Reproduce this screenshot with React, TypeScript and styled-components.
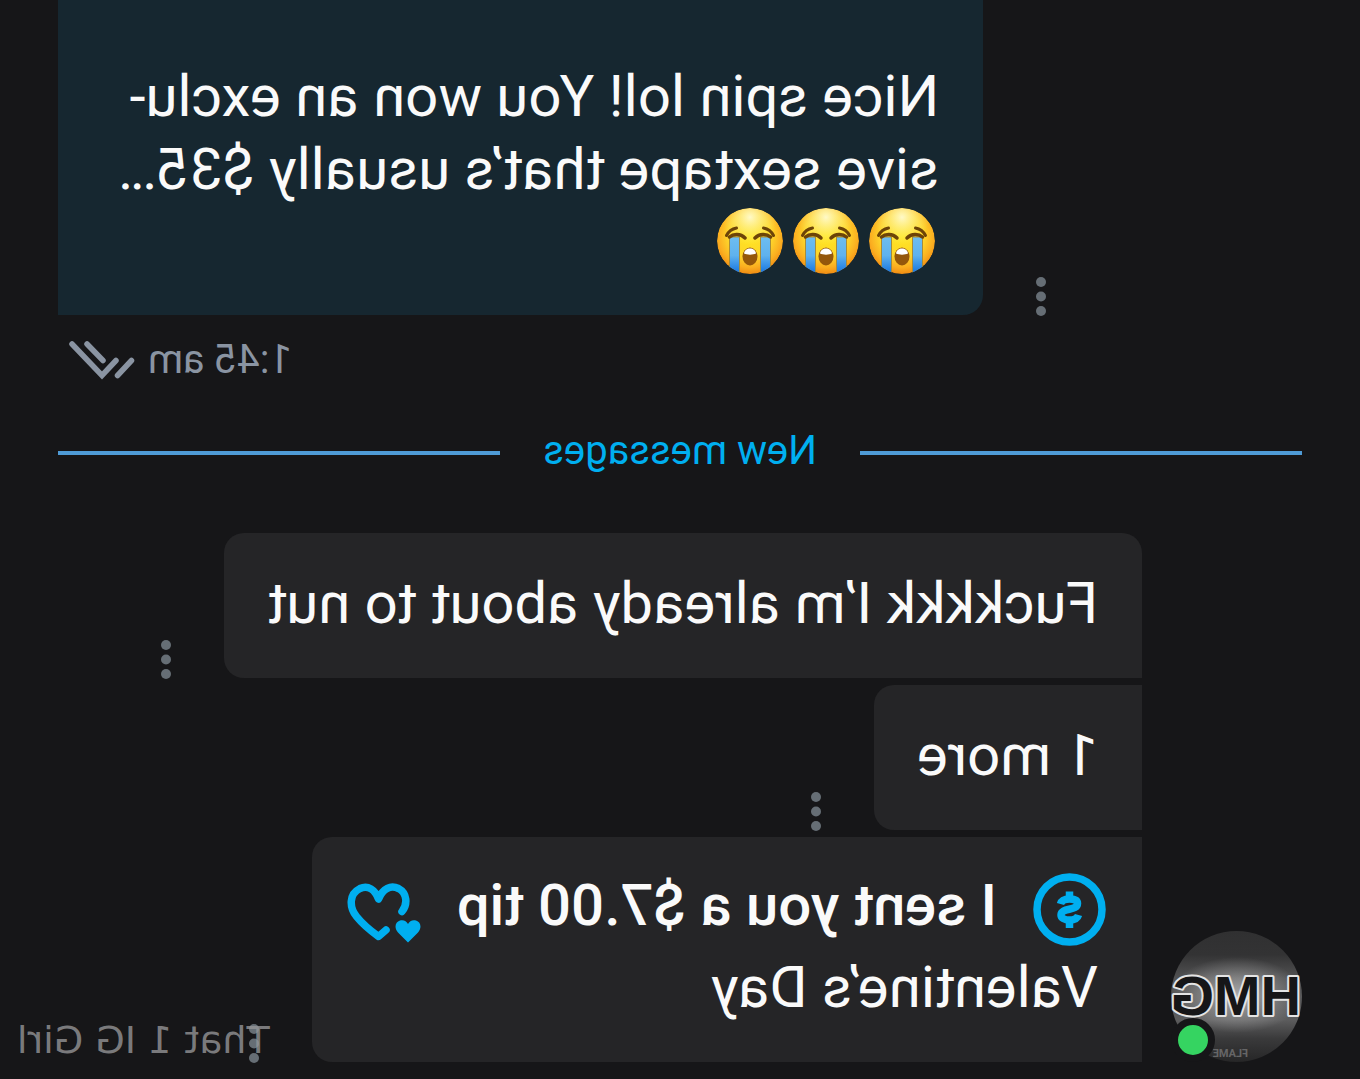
import React from "react";
import styled, { createGlobalStyle, css } from "styled-components";

const GlobalStyle = createGlobalStyle`
  body {
    margin: 0;
    background: #161618;
  }
  * {
    box-sizing: border-box;
  }
`;

const Page = styled.main`
  position: relative;
  min-height: 100vh;
  padding: 0 58px 17px;
  overflow: hidden;
  background: #161618;
  color: #fafafa;
  font-family: Roboto, "Noto Sans", sans-serif;
  font-size: 58px;
  line-height: 73px;
  transform: scaleX(-1);
`;

const Row = styled.div<{ $outgoing?: boolean }>`
  display: flex;
  align-items: flex-end;
  justify-content: ${(p) => (p.$outgoing ? "flex-end" : "flex-start")};
`;

const outgoingBubble = css`
  width: 925px;
  padding: 60px 44px 36px;
  background: #162730;
  border-radius: 0 0 0 20px;
`;

const incomingBubble = css`
  padding: 34px 43px 38px 44px;
  background: #252527;
`;

const Bubble = styled.div<{ $outgoing?: boolean; $first?: boolean }>`
  max-width: 100%;
  ${(p) => (p.$outgoing ? outgoingBubble : incomingBubble)}
  ${(p) =>
    !p.$outgoing && `border-radius: ${p.$first ? "20px" : "0"} 20px 20px 0;`}
  ${(p) => !p.$outgoing && !p.$first && "border-top-right-radius: 20px;"}
`;

const Text = styled.p`
  margin: 0;
`;

const EmojiLine = styled.div`
  display: flex;
  align-items: center;
  gap: 10px;
  height: 73px;
  padding: 0 4px 4px;
`;

const MenuButton = styled.button`
  display: flex;
  flex: none;
  justify-content: center;
  width: 116px;
  height: 39px;
  margin-bottom: -1px;
  padding: 0;
  border: 0;
  background: none;
  color: #666e75;
`;

const Meta = styled.div`
  display: flex;
  justify-content: flex-end;
  align-items: center;
  gap: 13px;
  padding: 21px 11px 0 0;
  color: #8a94a2;
  font-size: 40px;
  line-height: 48px;
`;

const Divider = styled.div`
  display: flex;
  align-items: center;
  gap: 43px;
  margin: 41px 0 57px;
  color: #00aff0;
  font-size: 40px;
  line-height: 51px;

  &::before,
  &::after {
    content: "";
    flex: 1;
    height: 4px;
    margin-top: 4px;
    background: #4f9bd6;
  }
`;

const Group = styled.section`
  display: flex;
  align-items: flex-end;
  gap: 29px;
`;

const Stack = styled.div`
  display: flex;
  flex: 1;
  flex-direction: column;
  gap: 7px;
`;

const Avatar = styled.div`
  position: relative;
  flex: none;
  width: 131px;
  height: 131px;
`;

const Online = styled.span`
  position: absolute;
  right: 0;
  bottom: 0;
  width: 44px;
  height: 44px;
  border: 7px solid #161618;
  border-radius: 50%;
  background: #35d461;
`;

const TipLine = styled.div`
  display: flex;
  align-items: flex-start;
  padding: 2px 0 5px;
  margin: 0 -8px;
  font-weight: 500;
  line-height: 64px;

  svg:last-child {
    margin-top: 10px;
  }
`;

const TipText = styled.span`
  margin: 0 36px;
`;

const Watermark = styled.span`
  position: absolute;
  right: 17px;
  bottom: 16px;
  color: rgba(150, 150, 152, 0.8);
  font-family: "DejaVu Sans", sans-serif;
  font-size: 38px;
  line-height: 46px;
`;

const Dots = () => (
  <svg width="10" height="39" viewBox="0 0 10 39" fill="currentColor" aria-hidden="true">
    <circle cx="5" cy="5" r="5" />
    <circle cx="5" cy="19.500" r="5" />
    <circle cx="5" cy="34" r="5" />
  </svg>
);

const Menu = () => (
  <MenuButton type="button" aria-label="Message options">
    <Dots />
  </MenuButton>
);

const Crying = () => (
  <svg width="66" height="66" viewBox="0 0 66 66" role="img" aria-label="Loudly crying face">
    <defs>
      <radialGradient id="face" cx="50%" cy="42%" r="60%">
        <stop offset="0" stopColor="#ffe61f" />
        <stop offset="0.55" stopColor="#fed52b" />
        <stop offset="0.8" stopColor="#fbae20" />
        <stop offset="1" stopColor="#ee8510" />
      </radialGradient>
      <radialGradient id="shine" cx="50%" cy="14%" r="42%">
        <stop offset="0" stopColor="#fffbd0" stopOpacity="0.95" />
        <stop offset="1" stopColor="#fff27a" stopOpacity="0" />
      </radialGradient>
      <linearGradient id="tear" x1="0" y1="0" x2="0" y2="1">
        <stop offset="0" stopColor="#6dbdf0" />
        <stop offset="0.5" stopColor="#5fb2ee" />
        <stop offset="1" stopColor="#1272e0" />
      </linearGradient>
      <clipPath id="round">
        <circle cx="33" cy="33" r="33" />
      </clipPath>
    </defs>
    <g clipPath="url(#round)">
      <circle cx="33" cy="33" r="33" fill="url(#face)" />
      <circle cx="33" cy="33" r="33" fill="url(#shine)" />
      <path d="M12.500 29h10v37h-10zM43.500 29h10v37h-10z" fill="url(#tear)" stroke="#a58c3c" strokeWidth="1" />
    </g>
    <g fill="none" stroke="#6d4408" strokeLinecap="round">
      <path d="M12.500 29c4-3.500 11-3.500 15.500 1M38 30c4.500-4.500 11.500-4.500 15.500-1" strokeWidth="3.500" />
      <path d="M9.500 27.500c2-4 5-6.500 10-7.500M56.500 27.500c-2-4-5-6.500-10-7.500" strokeWidth="3" />
    </g>
    <ellipse cx="33" cy="48.500" rx="7.500" ry="9" fill="#94570b" />
    <path d="M27 45.500c.5-3.500 3-5 6-5s5.500 1.500 6 5c-3 1.500-9 1.500-12 0z" fill="#fff" />
  </svg>
);

const DoubleCheck = () => (
  <svg
    width="66"
    height="40"
    viewBox="0 0 66 40"
    fill="none"
    stroke="currentColor"
    strokeWidth="5.500"
    strokeLinecap="round"
    role="img"
    aria-label="Read"
  >
    <path d="M3.500 20.500L17.500 35.500M19 20.500L33 35.500L63 4M32 20.500L48 4" />
  </svg>
);

const Dollar = () => (
  <svg width="73" height="73" viewBox="0 0 73 73" fill="none" stroke="#00aff0" role="img" aria-label="Tip">
    <circle cx="36.500" cy="36.500" r="32.500" strokeWidth="7.500" />
    <path
      d="M45.500 31C44.500 27.500 41 26 36.500 26C31.500 26 28.500 27.500 28.500 30.500C28.500 38.500 45 34 45 42C45 45 41.500 47 36.500 47C32 47 28.500 45.500 27.500 42"
      strokeWidth="7.500"
    />
    <path d="M36.500 18.500v7M36.500 47.500v7.500" strokeWidth="7.500" />
  </svg>
);

const Hearts = () => (
  <svg width="74" height="60" viewBox="0 0 74 60" fill="none" role="img" aria-label="Hearts">
    <path
      d="M19 28.500C13 21 14 10 22.500 5.500C30 2 38 5 42.500 16C46 6.500 53 2 61 5.500C72 11 72 24 64.500 33.500C58.500 41 50 48 42.500 53.500L35 47"
      stroke="#00aff0"
      strokeWidth="7.500"
      strokeLinecap="round"
      strokeLinejoin="round"
    />
    <path
      d="M13 59.500L3 49.500C-1 45 0 39 5 37.500C8.500 36.500 11.500 38 13 41C14.500 38 17.500 36.500 21 37.500C26 39 27 45 23 49.500Z"
      fill="#00aff0"
    />
  </svg>
);

const AvatarArt = () => (
  <svg width="131" height="131" viewBox="0 0 131 131" role="img" aria-label="HMG">
    <defs>
      <linearGradient id="sky" x1="0" y1="0" x2="0" y2="1">
        <stop offset="0" stopColor="#303031" />
        <stop offset="0.18" stopColor="#333334" />
        <stop offset="0.36" stopColor="#525253" />
        <stop offset="0.68" stopColor="#5c5c5d" />
        <stop offset="0.82" stopColor="#3a3a3b" />
        <stop offset="1" stopColor="#262627" />
      </linearGradient>
      <radialGradient id="glow" cx="50%" cy="50%" r="50%">
        <stop offset="0" stopColor="#fff" stopOpacity="0.5" />
        <stop offset="1" stopColor="#fff" stopOpacity="0" />
      </radialGradient>
      <clipPath id="disc">
        <circle cx="65.500" cy="65.500" r="65.500" />
      </clipPath>
    </defs>
    <g clipPath="url(#disc)">
      <rect width="131" height="131" fill="url(#sky)" />
      <ellipse cx="65" cy="64" rx="66" ry="38" fill="url(#glow)" />
      <text x="54" y="126" fill="#666667" fontFamily="Roboto, sans-serif" fontSize="11" fontWeight="700">
        FLAME
      </text>
    </g>
    <text
      x="1"
      y="84"
      fill="#161618"
      stroke="#e4e4e4"
      strokeWidth="4"
      strokeLinejoin="round"
      paintOrder="stroke"
      fontFamily="'Liberation Sans', sans-serif"
      fontSize="56"
      fontWeight="700"
    >
      HMG
    </text>
  </svg>
);

export default function App() {
  return (
    <>
      <GlobalStyle />
      <Page>
        <Row $outgoing>
          <Menu />
          <Bubble $outgoing>
            <Text>
              Nice spin lol! You won an exclu-
              <br />
              sive sextape that’s usually $35…
            </Text>
            <EmojiLine>
              <Crying />
              <Crying />
              <Crying />
            </EmojiLine>
          </Bubble>
        </Row>
        <Meta>
          <time>1:45 am</time>
          <DoubleCheck />
        </Meta>
        <Divider>New messages</Divider>
        <Group>
          <Avatar>
            <AvatarArt />
            <Online />
          </Avatar>
          <Stack>
            <Row>
              <Bubble $first>
                <Text>Fuckkkk I’m already about to nut</Text>
              </Bubble>
              <Menu />
            </Row>
            <Row>
              <Bubble>
                <Text>1 more</Text>
              </Bubble>
              <Menu />
            </Row>
            <Row>
              <Bubble>
                <TipLine>
                  <Dollar />
                  <TipText>I sent you a $7.00 tip</TipText>
                  <Hearts />
                </TipLine>
                <Text>Valentine’s Day</Text>
              </Bubble>
              <Menu />
            </Row>
          </Stack>
        </Group>
        <Watermark>That 1 IG Girl</Watermark>
      </Page>
    </>
  );
}
